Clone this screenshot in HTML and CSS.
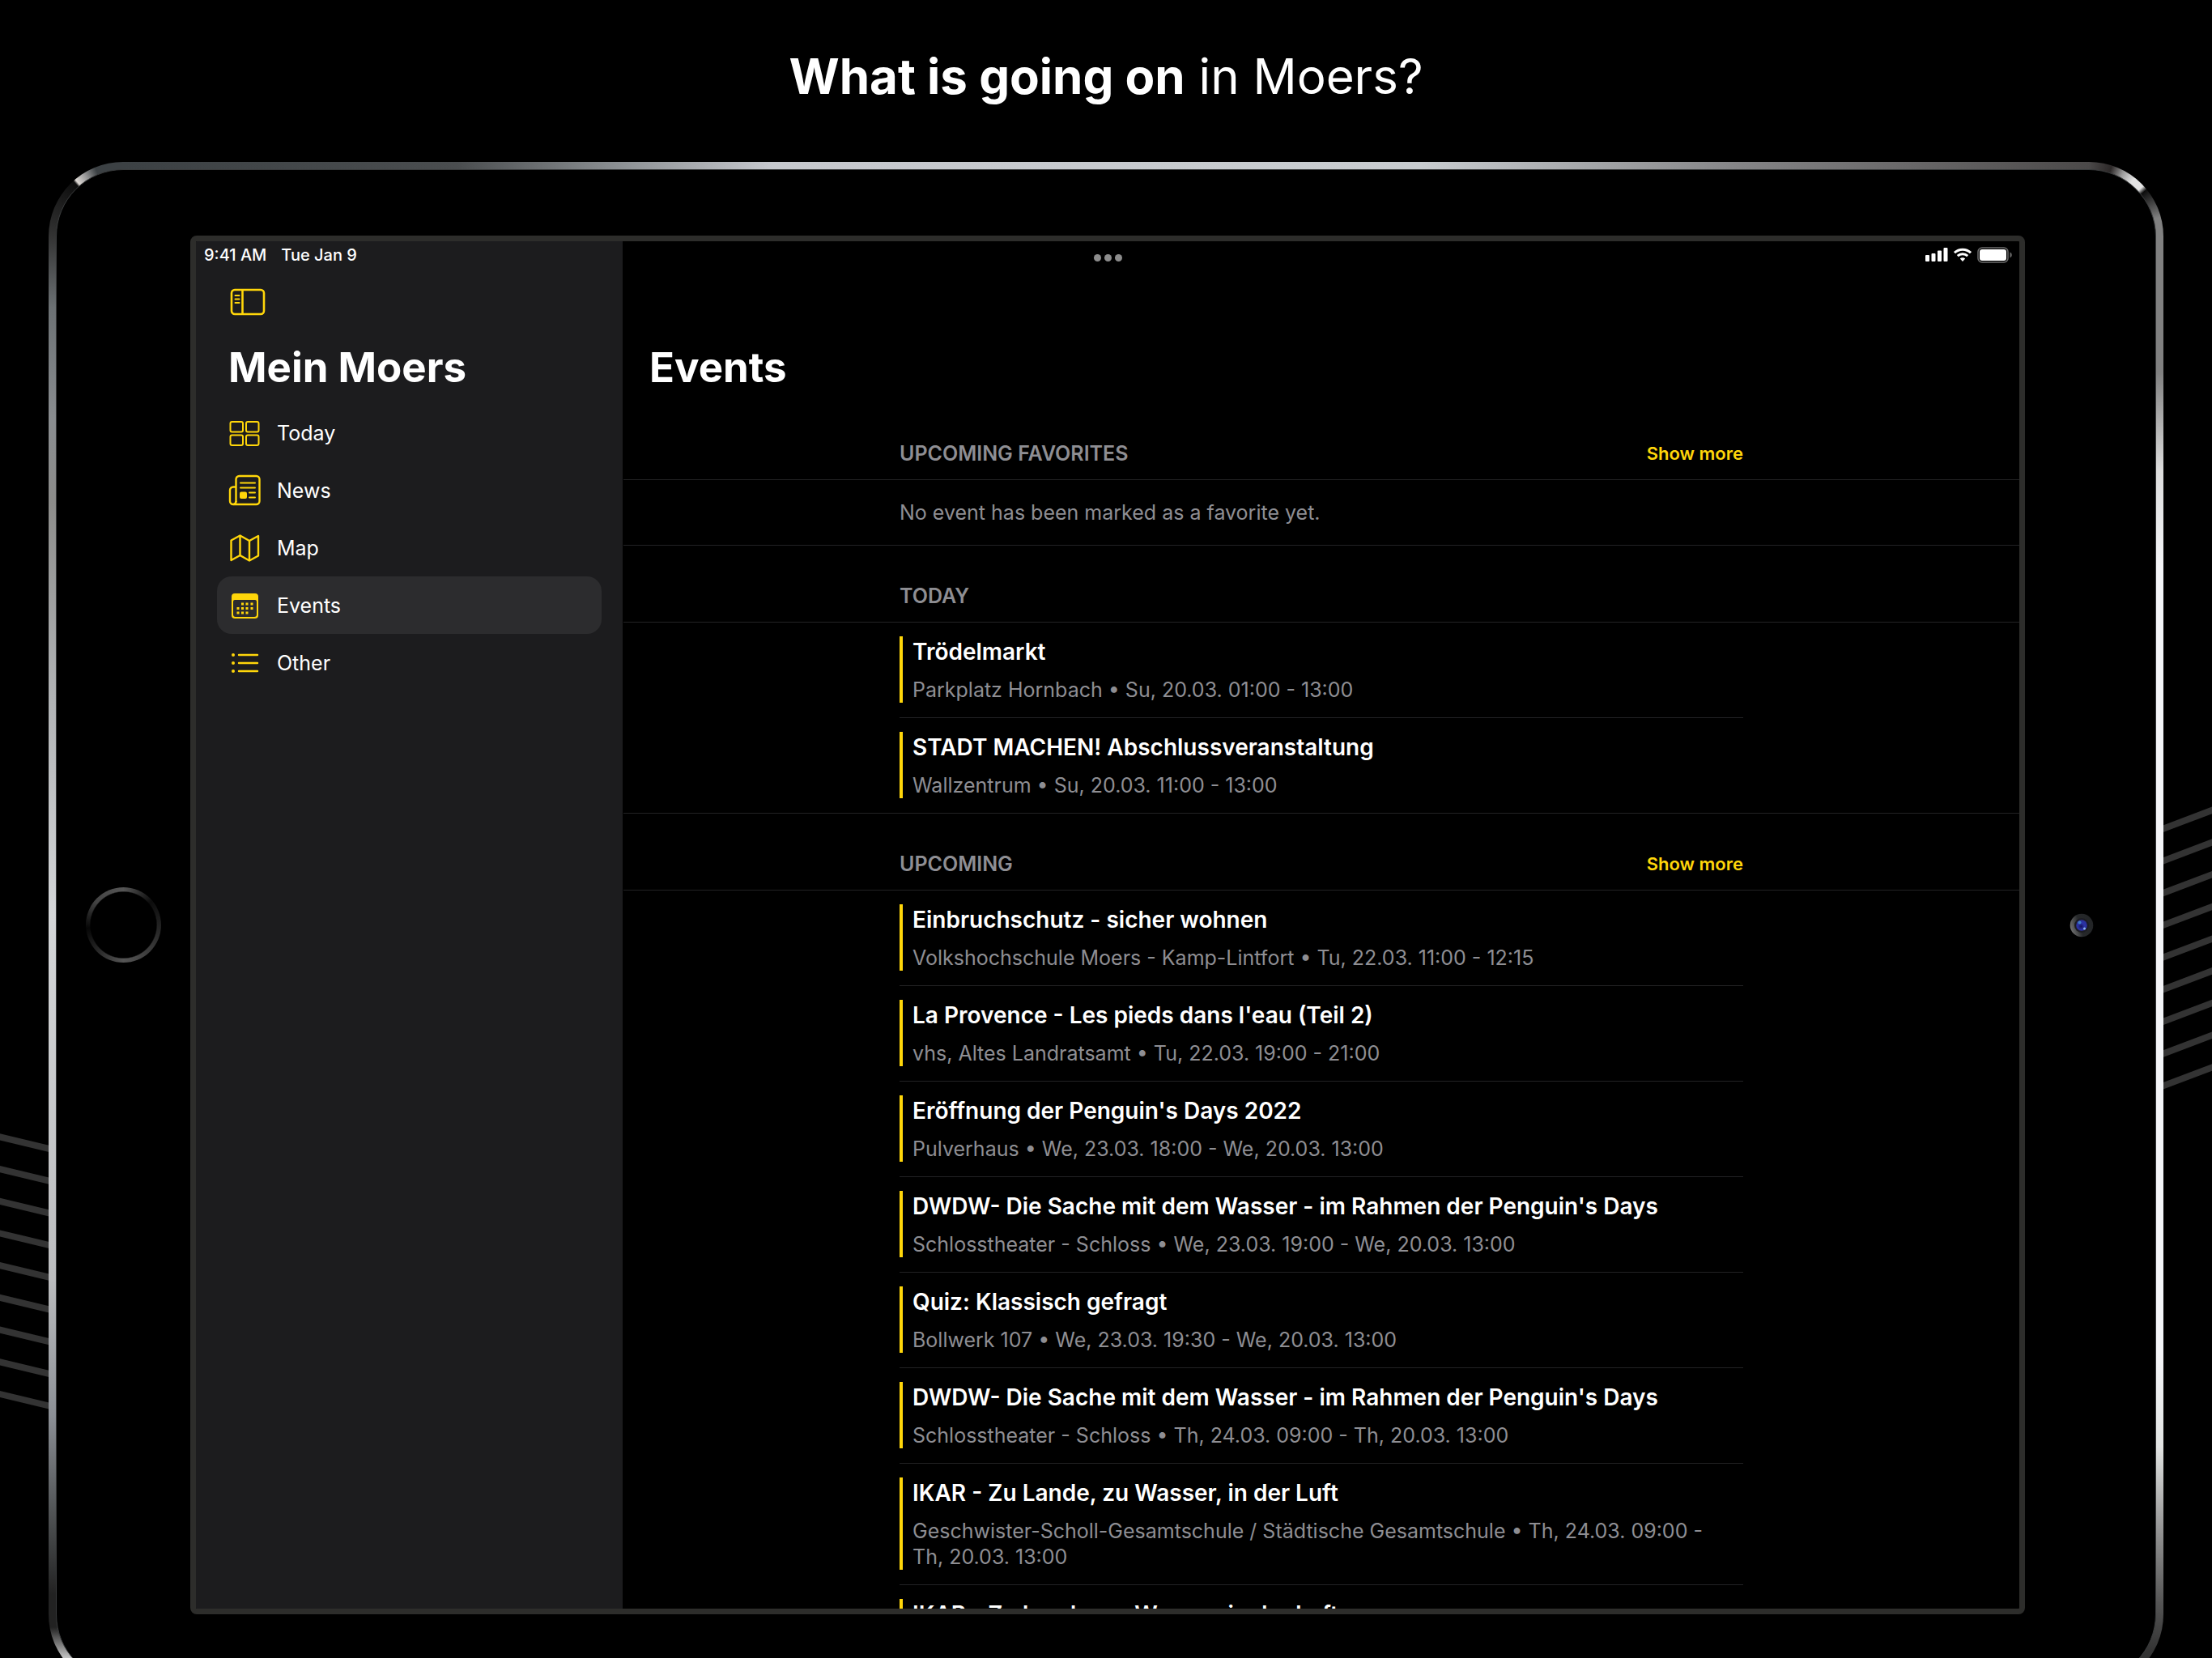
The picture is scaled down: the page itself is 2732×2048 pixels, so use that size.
FILE: index.html
```html
<!DOCTYPE html>
<html lang="en">
<head>
<meta charset="utf-8">
<meta name="viewport" content="width=device-width, initial-scale=1">
<title>Mein Moers – Events</title>
<link rel="stylesheet" href="styles.css">
</head>
<body>
<div class="poster">
  <svg class="stripes stripes-left" viewBox="0 0 100 400" aria-hidden="true">
    <path d="M-10 27l120 28.800M-10 66.700l120 28.800M-10 106.400l120 28.800M-10 146.100l120 28.800M-10 185.800l120 28.800M-10 225.500l120 28.800M-10 265.200l120 28.800M-10 304.900l120 28.800M-10 344.600l120 28.800"/>
  </svg>
  <svg class="stripes stripes-right" viewBox="0 0 100 400" aria-hidden="true">
    <path d="M-10 61.500l120 -45.400M-10 101.200l120 -45.400M-10 140.900l120 -45.400M-10 180.600l120 -45.400M-10 220.300l120 -45.400M-10 260l120 -45.400M-10 299.700l120 -45.400M-10 339.400l120 -45.400M-10 379.100l120 -45.400"/>
  </svg>

  <h1 class="headline"><strong>What is going on</strong> in Moers?</h1>

  <div class="device">
    <div class="bezel">
      <div class="home-side"><span class="home-button"></span></div>

      <div class="screen">
        <aside class="sidebar">
          <div class="status"><span>9:41 AM</span><span>Tue Jan 9</span></div>
          <button class="toggle" type="button" aria-label="Toggle sidebar">
            <svg width="44" height="34" viewBox="0 0 44 34" fill="none" stroke="currentColor" stroke-width="2.600">
              <rect x="2" y="2" width="40" height="30" rx="4"/>
              <path d="M15.500 2v30"/>
              <path d="M6.500 9h5M6.500 13.500h5M6.500 18h5" stroke-width="2" stroke-linecap="round"/>
            </svg>
          </button>
          <h2 class="title">Mein Moers</h2>
          <nav class="nav">
            <a class="nav-item" href="#today">
              <svg class="nav-icon" viewBox="0 0 40 40" fill="none" stroke="currentColor" stroke-width="2">
                <rect x="2.500" y="6" width="15.500" height="12.500" rx="2"/><rect x="22" y="6" width="15.500" height="12.500" rx="2"/>
                <rect x="2.500" y="22.500" width="15.500" height="12.500" rx="2"/><rect x="22" y="22.500" width="15.500" height="12.500" rx="2"/>
              </svg>
              <span>Today</span>
            </a>
            <a class="nav-item" href="#news">
              <svg class="nav-icon" viewBox="0 0 40 40" fill="none" stroke="currentColor" stroke-width="2.400">
                <path d="M9.500 34V6a4 4 0 0 1 4-4h21a4 4 0 0 1 4 4v27a4 4 0 0 1-4 4H6a4 4 0 0 1-4-4V19.500a4 4 0 0 1 4-4h3.500"/>
                <path d="M9.500 33a4 4 0 0 1-3 4"/>
                <path d="M15 10.500h18M15 16.500h18M26 22.500h7M26 28.500h7" stroke-width="2" stroke-linecap="round"/>
                <rect x="14" y="21.500" width="9" height="8.500" rx="2" fill="currentColor" stroke="none"/>
              </svg>
              <span>News</span>
            </a>
            <a class="nav-item" href="#map">
              <svg class="nav-icon" viewBox="0 0 40 40" fill="none" stroke="currentColor" stroke-width="2.400" stroke-linejoin="round">
                <path d="M3.500 10.500L14.500 4.500L26 11L37 5V29.500L26 35.500L14.500 29L3.500 35Z"/>
                <path d="M14.500 4.500V29M26 11V35.500"/>
              </svg>
              <span>Map</span>
            </a>
            <a class="nav-item active" href="#events" aria-current="page">
              <svg class="nav-icon" viewBox="0 0 40 40" fill="currentColor">
                <path fill-rule="evenodd" d="M8 5h25a4 4 0 0 1 4 4v23a4 4 0 0 1-4 4H8a4 4 0 0 1-4-4V9a4 4 0 0 1 4-4ZM8 13a2 2 0 0 0-2 2v16a3 3 0 0 0 3 3h23a3 3 0 0 0 3-3V15a2 2 0 0 0-2-2Z"/>
                <path d="M16 16.500h3v3h-3zM21.500 16.500h3v3h-3zM27.500 16.500h3v3h-3zM10.500 22h3v3h-3zM16 22h3v3h-3zM21.500 22h3v3h-3zM27.500 22h3v3h-3zM10.500 27.500h3v3h-3zM16 27.500h3v3h-3zM21.500 27.500h3v3h-3z"/>
              </svg>
              <span>Events</span>
            </a>
            <a class="nav-item" href="#other">
              <svg class="nav-icon" viewBox="0 0 40 40" fill="none" stroke="currentColor" stroke-width="2.400" stroke-linecap="round">
                <path d="M13 10h23M13 20h23M13 30h23"/>
                <path d="M6 10h.01M6 20h.01M6 30h.01" stroke-width="4"/>
              </svg>
              <span>Other</span>
            </a>
          </nav>
        </aside>

        <main class="content">
          <div class="system-icons">
            <svg width="28" height="18" viewBox="0 0 28 18" fill="#fff" aria-hidden="true">
              <rect x="0" y="9" width="5" height="8" rx="1"/><rect x="7.500" y="7" width="5" height="10" rx="1"/><rect x="15" y="3.500" width="5" height="13.500" rx="1"/><rect x="22.500" y="0" width="5" height="17" rx="1"/>
            </svg>
            <svg width="22" height="18" viewBox="0 0 22 18" fill="none" stroke="#fff" stroke-width="3" aria-hidden="true">
              <path d="M1 6.200A14.500 14.500 0 0 1 21 6.200"/>
              <path d="M4.800 10.200A9 9 0 0 1 17.200 10.200"/>
              <path d="M11 17L7.800 13.500A4.600 4.600 0 0 1 14.200 13.500Z" fill="#fff" stroke="none"/>
            </svg>
            <svg width="44" height="20" viewBox="0 0 44 20" aria-hidden="true">
              <rect x="1" y="1" width="37" height="18" rx="5" fill="none" stroke="#6c6c6c" stroke-width="1.500"/>
              <rect x="3" y="3" width="33" height="14" rx="3" fill="#fff"/>
              <path d="M40.500 6.500a3.800 3.800 0 0 1 0 7Z" fill="#6c6c6c"/>
            </svg>
          </div>
          <button class="multitask" type="button" aria-label="Multitasking"><i></i><i></i><i></i></button>

          <h2 class="title">Events</h2>

          <section class="group">
            <header class="group-head"><h3>UPCOMING FAVORITES</h3><a href="#favorites">Show more</a></header>
            <div class="group-body"><p class="empty">No event has been marked as a favorite yet.</p></div>
          </section>

          <section class="group">
            <header class="group-head"><h3>TODAY</h3></header>
            <ul class="group-body">
              <li class="event"><div class="event-text"><h4>Trödelmarkt</h4><p>Parkplatz Hornbach • Su, 20.03. 01:00 - 13:00</p></div></li>
              <li class="event"><div class="event-text"><h4>STADT MACHEN! Abschlussveranstaltung</h4><p>Wallzentrum • Su, 20.03. 11:00 - 13:00</p></div></li>
            </ul>
          </section>

          <section class="group">
            <header class="group-head"><h3>UPCOMING</h3><a href="#upcoming">Show more</a></header>
            <ul class="group-body">
              <li class="event"><div class="event-text"><h4>Einbruchschutz - sicher wohnen</h4><p>Volkshochschule Moers - Kamp-Lintfort • Tu, 22.03. 11:00 - 12:15</p></div></li>
              <li class="event"><div class="event-text"><h4>La Provence - Les pieds dans l'eau (Teil 2)</h4><p>vhs, Altes Landratsamt • Tu, 22.03. 19:00 - 21:00</p></div></li>
              <li class="event"><div class="event-text"><h4>Eröffnung der Penguin's Days 2022</h4><p>Pulverhaus • We, 23.03. 18:00 - We, 20.03. 13:00</p></div></li>
              <li class="event"><div class="event-text"><h4>DWDW- Die Sache mit dem Wasser - im Rahmen der Penguin's Days</h4><p>Schlosstheater - Schloss • We, 23.03. 19:00 - We, 20.03. 13:00</p></div></li>
              <li class="event"><div class="event-text"><h4>Quiz: Klassisch gefragt</h4><p>Bollwerk 107 • We, 23.03. 19:30 - We, 20.03. 13:00</p></div></li>
              <li class="event"><div class="event-text"><h4>DWDW- Die Sache mit dem Wasser - im Rahmen der Penguin's Days</h4><p>Schlosstheater - Schloss • Th, 24.03. 09:00 - Th, 20.03. 13:00</p></div></li>
              <li class="event"><div class="event-text"><h4>IKAR - Zu Lande, zu Wasser, in der Luft</h4><p>Geschwister-Scholl-Gesamtschule / Städtische Gesamtschule • Th, 24.03. 09:00 - Th,&nbsp;20.03. 13:00</p></div></li>
              <li class="event"><div class="event-text"><h4>IKAR - Zu Lande, zu Wasser, in der Luft</h4></div></li>
            </ul>
          </section>
        </main>
      </div>

      <div class="camera-side">
        <svg class="camera" width="30" height="30" viewBox="0 0 30 30" aria-hidden="true">
          <defs>
            <linearGradient id="ring" x1="0" y1="0.700" x2="1" y2="0.400"><stop offset="0" stop-color="#777"/><stop offset="0.450" stop-color="#26282a"/><stop offset="1" stop-color="#222426"/></linearGradient>
            <radialGradient id="lens" cx="0.450" cy="0.600" r="0.600"><stop offset="0" stop-color="#14145a"/><stop offset="0.500" stop-color="#2b33a5"/><stop offset="1" stop-color="#2a2f9a"/></radialGradient>
          </defs>
          <circle cx="15" cy="15" r="14.300" fill="url(#ring)"/>
          <circle cx="15" cy="15" r="9" fill="#1c1c22"/>
          <circle cx="15" cy="15" r="6.800" fill="url(#lens)"/>
          <circle cx="12.500" cy="11.500" r="2" fill="#3f7fc8"/>
          <circle cx="18.500" cy="19" r="1.500" fill="#8fb6ee"/>
        </svg>
      </div>
    </div>
  </div>
</div>
</body>
</html>
```
FILE: styles.css
```css
* {
  box-sizing: border-box;
  margin: 0;
  padding: 0;
}

:root {
  --accent: #ffd60a;
  --grey: #8e8e93;
  --line: #222224;
  --panel: #1c1c1e;
}

body {
  background: #000;
  color: #fff;
  font-family: Inter, "Liberation Sans", sans-serif;
}

a {
  color: inherit;
  text-decoration: none;
}

button {
  border: 0;
  background: none;
  color: inherit;
  font: inherit;
}

.poster {
  position: relative;
  height: 100vh;
  overflow: hidden;
}

.headline {
  height: 200px;
  padding-top: 57px;
  font-size: 60px;
  line-height: 74px;
  font-weight: 400;
  text-align: center;
}

.headline strong {
  font-weight: 700;
}

/* Decorative stripes behind the tablet */
.stripes {
  position: absolute;
  width: 100px;
  height: 400px;
  fill: none;
  stroke: #333;
  stroke-width: 8;
}

.stripes-left {
  left: 0;
  top: 1375px;
}

.stripes-right {
  right: 0;
  top: 981px;
}

/* Tablet body: the two top corners, the top edge, then the two sides */
.device {
  position: relative;
  margin: 0 60px;
  padding: 9px;
  border-radius: 92px;
  background:
    conic-gradient(from 270deg at 100% 100%, #333 0deg, #1c1c1c 30deg, #0c0c0c 48deg, #ddd8d4 50deg, #999 58deg, #3c4144 68deg, #3c4144 90deg, #000 91deg) 0 0 / 92px 92px no-repeat,
    conic-gradient(at 0% 100%, #4b4949 0deg, #2c2828 18deg, #999 28deg, #e4e4e4 38deg, #e4e4e4 47deg, #0c0c0c 51deg, #808080 75deg, #808080 90deg, #000 91deg) 100% 0 / 92px 92px no-repeat,
    linear-gradient(90deg, #3c4144, #4a4d4f 17%, #8a8e91 25%, #c6c8cd 33%, #c8cccf 66%, #858587 82%, #4b4949) 92px 0 / calc(100% - 184px) 24px no-repeat,
    linear-gradient(#333 92px, #6c7174 180px, #8a8d90 320px, #8c8c8a 420px, #aeb0b2 640px, #d4d6d8 930px, #bcbdbf 1380px, #8b8f95 1550px, #55585a 1660px, #222 1770px, #222 1810px, #ccc 1850px) 0 0 / 50% 100% no-repeat,
    linear-gradient(#808080 260px, #dcdcdc 380px, #f4f5f8 500px, #f4f5f8 1472px, #e2e4e3 1587px, #999 1683px, #555 1780px, #333 1840px) 100% 0 / 50% 100% no-repeat;
}

.bezel {
  display: flex;
  align-items: stretch;
  padding: 81px 0 82px;
  border: 1px solid #3a3c3d;
  border-radius: 83px;
  background: #000;
}

.home-side,
.camera-side {
  flex: 0 0 165px;
  display: flex;
  align-items: center;
  justify-content: center;
}

.camera-side {
  flex-basis: 161px;
  padding-right: 22px;
}

.home-button {
  width: 93px;
  height: 93px;
  border-radius: 50%;
  background:
    radial-gradient(closest-side, #000 87%, transparent 90%),
    conic-gradient(#555, #0c0c0c 50deg, #1c1c1c 80deg, #444 150deg, #555 180deg, #222 230deg, #060606 265deg, #444 310deg, #555);
}

.screen {
  flex: 1;
  box-sizing: content-box;
  display: flex;
  aspect-ratio: 4 / 3;
  min-width: 0;
  min-height: 0;
  overflow: hidden;
  border: 7px solid #2d2d2b;
  border-radius: 8px;
  contain: size;
}

/* Sidebar */
.sidebar {
  flex: 0 0 527px;
  padding: 0 26px;
  background: var(--panel);
}

.status {
  display: flex;
  gap: 18px;
  margin: 0 -16px;
  height: 34px;
  font-size: 20px;
  line-height: 34px;
  font-weight: 500;
}

.toggle {
  display: block;
  margin: 23px 0 0 16px;
  height: 36px;
  color: var(--accent);
}

.toggle svg {
  display: block;
}

.title {
  height: 64px;
  font-size: 51px;
  line-height: 64px;
  font-weight: 700;
}

.sidebar .title {
  margin: 31px 0 13px 14px;
}

.nav-item {
  display: flex;
  align-items: center;
  gap: 20px;
  height: 71px;
  padding-left: 14px;
  border-radius: 18px;
  font-size: 25px;
}

.nav-item.active {
  background: #2c2c2e;
}

.nav-icon {
  flex: 0 0 40px;
  height: 40px;
  color: var(--accent);
}

/* Main column */
.content {
  position: relative;
  flex: 1;
  min-width: 0;
  padding-left: 1px;
}

.content .title {
  margin: 124px 0 12px 32px;
}

.system-icons {
  position: absolute;
  top: 7px;
  right: 8px;
  display: flex;
  align-items: center;
  gap: 7px;
}

/* Centred on the whole screen, not on the main column */
.multitask {
  position: absolute;
  top: 16px;
  right: 1108px;
  display: flex;
  gap: 4px;
}

.multitask i {
  width: 9px;
  height: 9px;
  border-radius: 50%;
  background: #8c8c8c;
}

.group-head {
  display: flex;
  align-items: center;
  justify-content: space-between;
  width: 1042px;
  max-width: 100%;
  height: 94px;
  margin: 0 auto;
  padding-top: 30px;
}

.group-head h3 {
  font-size: 25px;
  line-height: 30px;
  font-weight: 600;
  color: var(--grey);
}

.group-head a {
  font-size: 22px;
  line-height: 30px;
  font-weight: 600;
  color: var(--accent);
}

.group-body {
  border: solid var(--line);
  border-width: 1px 0;
  list-style: none;
}

.empty {
  max-width: 1042px;
  margin: 0 auto;
  padding: 24px 0;
  font-size: 25px;
  line-height: 32px;
  color: var(--grey);
}

.event {
  max-width: 1042px;
  margin: 0 auto;
  padding: 17px 0 18px;
}

.event + .event {
  border-top: 1px solid var(--line);
}

.event-text {
  padding-left: 12px;
  border-left: 4px solid var(--accent);
}

.event h4 {
  font-size: 28px;
  line-height: 38px;
  font-weight: 600;
}

.event p {
  padding-top: 12px;
  font-size: 25px;
  line-height: 32px;
  color: var(--grey);
}
```
